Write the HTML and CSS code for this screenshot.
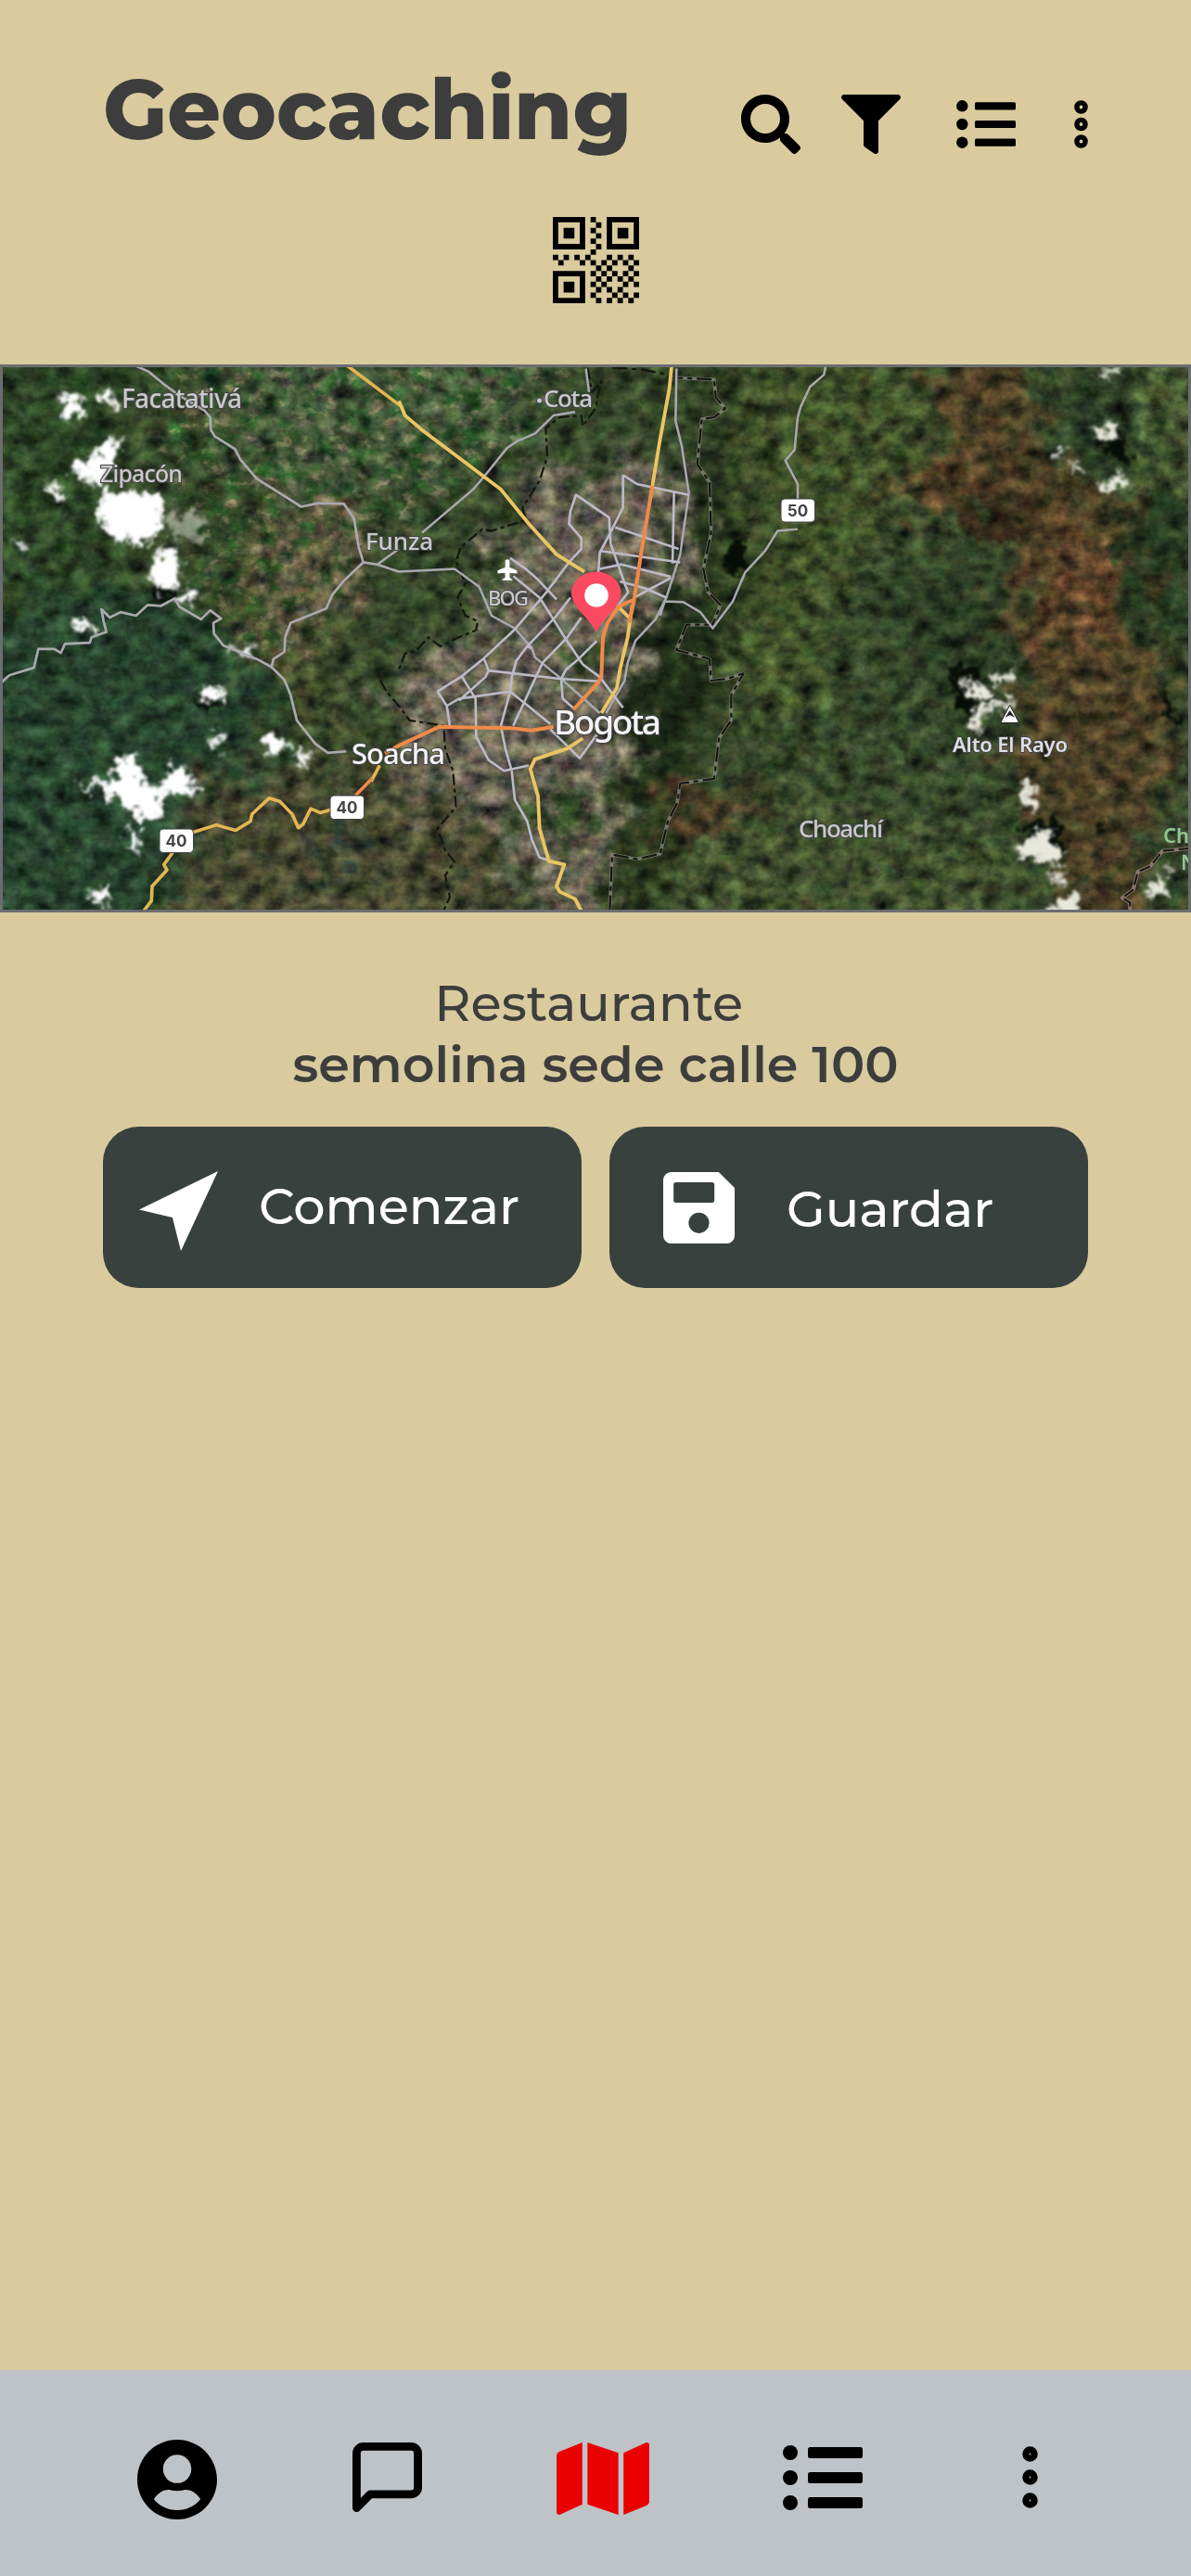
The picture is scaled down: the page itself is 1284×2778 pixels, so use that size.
FILE: index.html
```html
<!DOCTYPE html>
<html lang="es">
<head>
<meta charset="utf-8">
<title>Geocaching</title>
<link rel="stylesheet" href="styles.css">
</head>
<body>
<div class="screen">
  <header class="top">
    <h1 class="title">Geocaching</h1>
    <div class="actions">
      <svg class="ic-search" viewBox="0 0 512 512"><path d="M505 442.7L405.3 343c-4.5-4.5-10.6-7-17-7H372c27.600-35.300 44-79.700 44-128C416 93.100 322.900 0 208 0S0 93.100 0 208s93.100 208 208 208c48.300 0 92.700-16.400 128-44v16.300c0 6.400 2.500 12.500 7 17l99.700 99.700c9.400 9.400 24.600 9.400 33.900 0l28.300-28.300c9.400-9.400 9.400-24.600.1-34zM208 336c-70.700 0-128-57.200-128-128 0-70.700 57.200-128 128-128 70.700 0 128 57.200 128 128 0 70.700-57.200 128-128 128z"/></svg>
      <svg class="ic-filter" viewBox="0 0 512 512"><path d="M487.976 0H24.028C2.710 0-8.047 25.866 7.058 40.971L192 225.941V432c0 7.831 3.821 15.170 10.237 19.662l80 55.980C298.020 518.690 320 507.493 320 487.980V225.941l184.947-184.970C520.021 25.896 509.338 0 487.976 0z"/></svg>
      <svg class="ic-list" viewBox="0 0 64 52"><circle cx="6.300" cy="6.300" r="6.200"/><circle cx="6.300" cy="26" r="6.200"/><circle cx="6.300" cy="45.700" r="6.200"/><rect x="20" y="2.200" width="44" height="8.200" rx="1.500"/><rect x="20" y="21.900" width="44" height="8.200" rx="1.500"/><rect x="20" y="41.600" width="44" height="8.200" rx="1.500"/></svg>
      <svg class="ic-dots" viewBox="0 0 15 52"><g fill="none" stroke="#000" stroke-width="5.400"><circle cx="7.500" cy="7.500" r="4.600"/><circle cx="7.500" cy="26" r="4.600"/><circle cx="7.500" cy="44.500" r="4.600"/></g></svg>
    </div>
  </header>

  <div class="qr-row">
    <svg class="qr" viewBox="0 0 16 16">
      <path fill="none" stroke="#000" d="M.5.5h5v5h-5zM10.500.5h5v5h-5zM.5 10.500h5v5h-5z"/>
      <path d="M2 2h2v2h-2zM12 2h2v2h-2zM2 12h2v2h-2z"/>
      <path d="M7 0h1v1h-1zM8 1h1v1h-1zM7 2h1v1h-1zM8 3h1v1h-1zM7 4h1v1h-1zM8 5h1v1h-1zM7 6h1v1h-1zM0 7h1v1h-1zM2 7h1v1h-1zM4 7h1v1h-1zM6 7h1v1h-1zM10 7h1v1h-1zM12 7h1v1h-1zM14 7h1v1h-1zM1 8h1v1h-1zM5 8h1v1h-1zM7 8h1v1h-1zM9 8h1v1h-1zM11 8h1v1h-1zM13 8h1v1h-1zM15 8h1v1h-1z"/>
      <path d="M8 9h1v1h-1zM10 9h1v1h-1zM14 9h1v1h-1zM7 10h1v1h-1zM9 10h1v1h-1zM11 10h1v1h-1zM13 10h1v1h-1zM15 10h1v1h-1zM8 11h1v1h-1zM10 11h1v1h-1zM12 11h1v1h-1zM14 11h1v1h-1zM7 12h1v1h-1zM9 12h1v1h-1zM13 12h1v1h-1zM15 12h1v1h-1zM8 13h1v1h-1zM10 13h1v1h-1zM12 13h1v1h-1zM7 14h1v1h-1zM11 14h1v1h-1zM13 14h1v1h-1zM15 14h1v1h-1zM8 15h1v1h-1zM10 15h1v1h-1zM12 15h1v1h-1zM14 15h1v1h-1z"/>
    </svg>
  </div>

  <div class="map">
    <svg viewBox="3 396 1278 585" preserveAspectRatio="none">
      <defs>
        <filter id="soft" x="-20%" y="-20%" width="140%" height="140%" color-interpolation-filters="sRGB"><feTurbulence type="fractalNoise" baseFrequency=".03" numOctaves="5" seed="3" result="n"/><feGaussianBlur in="SourceGraphic" stdDeviation="12" result="b"/><feDisplacementMap in="b" in2="n" scale="110" xChannelSelector="R" yChannelSelector="G"/></filter>
        <filter id="ragged" x="-10%" y="-10%" width="120%" height="120%" color-interpolation-filters="sRGB"><feTurbulence type="fractalNoise" baseFrequency=".09" numOctaves="4" seed="8" result="n"/><feGaussianBlur in="SourceGraphic" stdDeviation="2" result="s"/><feDisplacementMap in="s" in2="n" scale="28" xChannelSelector="R" yChannelSelector="G" result="d"/><feGaussianBlur in="d" stdDeviation=".8"/></filter>
        <filter id="grain" x="0" y="0" width="100%" height="100%" color-interpolation-filters="sRGB"><feTurbulence type="fractalNoise" baseFrequency=".05 .06" numOctaves="6" seed="5"/><feColorMatrix values="1 .5 .2 0 -.35  .8 .7 .2 0 -.34  .8 .5 .4 0 -.36  0 0 0 0 1"/></filter>
        <filter id="fields" x="0" y="0" width="100%" height="100%" color-interpolation-filters="sRGB"><feTurbulence type="fractalNoise" baseFrequency=".06 .08" numOctaves="4" seed="21"/><feColorMatrix values="0 0 0 0 .52  0 0 0 0 .47  0 0 0 0 .38  7 0 0 0 -3.900"/></filter>
        <filter id="crops" x="0" y="0" width="100%" height="100%" color-interpolation-filters="sRGB"><feTurbulence type="fractalNoise" baseFrequency=".05" numOctaves="4" seed="33"/><feColorMatrix values="0 0 0 0 .12  0 0 0 0 .31  0 0 0 0 .13  0 5 0 0 -2.500"/></filter>
        <filter id="feather" x="-10%" y="-10%" width="120%" height="120%"><feGaussianBlur stdDeviation="16"/></filter>
        <mask id="plain"><path fill="#fff" filter="url(#feather)" d="M190 370H640L560 480 400 600 330 720 250 700 210 600 160 470Z"/></mask>
      </defs>
      <rect x="0" y="390" width="1290" height="600" fill="#35452a"/>
      <g filter="url(#soft)">
        <path fill="#27412d" d="M-30 640 200 640 290 740 300 850 150 1030-60 1030Z"/>
        <path fill="#2d4326" d="M-60 350H140V640H-60Z"/>
        <path fill="#40482a" d="M130 430 250 470 280 560 230 640 300 740 360 800 380 720 300 640 310 540 220 440Z"/>
        <path fill="#44553a" d="M230 360H620L560 480 420 520 380 560 300 540 240 480Z"/>
        <path fill="#5a543e" d="M310 540 380 520 400 610 350 690 300 720 270 640Z"/>
        <path fill="#454630" d="M210 840 480 810 600 1030 180 1030Z"/>
        <path fill="#676154" d="M545 575 570 500 650 510 690 490 745 510 740 590 735 640 690 740 665 830 660 900 640 1000 600 1000 540 900 470 860 420 840 430 720 530 670Z"/>
        <path fill="#2c3a1f" d="M725 360 770 400 765 540 745 650 760 680 730 800 680 850 650 1030 740 930 760 780 800 640 790 540 790 360Z"/>
        <path fill="#1c2917" d="M715 630 755 660 740 800 690 880 675 780 700 700ZM748 480 770 480 765 600 745 600Z"/>
        <path fill="#3e4d29" d="M790 360 1010 360 980 520 900 640 890 740 850 800 790 780 800 600Z"/>
        <path fill="#3e4c2d" d="M730 900 860 840 960 880 1100 900 1100 1030 700 1030Z"/>
        <path fill="#4b3e26" d="M1020 360 1110 360 1120 500 1210 530 1290 560 1240 630 1210 700 1260 800 1220 850 1240 1030 1170 1030 1130 880 1080 830 1110 730 1080 650 1100 560 1000 560 950 540 1010 490Z"/>
        <path fill="#4a3e26" d="M1100 660 1260 700 1270 860 1200 900 1120 840Z"/>
        <path fill="#35291a" d="M1040 530 1110 510 1100 580 1040 580Z"/>
        <path fill="#5c412a" d="M1120 550 1220 590 1200 700 1120 700ZM980 520 1040 500 1030 540 980 550ZM1230 590 1280 560 1270 590 1230 620Z"/>
        <path fill="#223620" d="M1180 580 1290 530 1290 580 1200 620ZM1220 640 1290 580 1290 680 1250 690Z"/>
        <path fill="#2b3b24" d="M930 640 1080 610 1100 700 1070 780 1000 720Z"/>
        <path fill="#435430" d="M1220 370H1330V540L1220 530Z"/>
        <path fill="#283a25" d="M1130 410 1210 430 1220 520 1150 500Z"/>
        <path fill="#493825" d="M720 850 830 860 790 890 710 920Z"/>
        <path fill="#1d3536" d="M348 885 380 885 370 920 342 930Z"/>
        <path fill="#29401f" d="M600 700 640 680 650 720 610 740ZM560 860 620 860 620 900 580 900Z"/>
      </g>
      <g mask="url(#plain)"><rect x="140" y="390" width="520" height="340" filter="url(#crops)" opacity=".7"/><rect x="140" y="390" width="520" height="340" filter="url(#fields)" opacity=".55"/></g>
      <rect class="grain" x="0" y="390" width="1290" height="600" filter="url(#grain)"/>

      <g filter="url(#ragged)">
        <g fill="#060d06"><ellipse cx="794" cy="600" rx="11" ry="24"/><path d="M1022 720 1056 716 1066 750 1044 780 1030 760ZM1100 890 1140 880 1150 920 1110 910ZM155 635 185 625 195 650 165 648ZM205 755 240 750 225 768ZM1180 470 1210 465 1220 500 1190 490ZM1178 888 1192 888 1196 902 1184 898Z"/><path d="M1245 735 1262 752 1272 785 1260 775Z"/></g>
        <g fill="#fff" stroke="#fff" stroke-width="2">
          <path d="M62 425 90 434 92 448 72 446ZM112 424 124 426 120 442 112 436ZM80 502 118 480 128 470 126 496 114 515 105 524 80 512ZM108 535 140 528 170 535 176 560 165 580 150 588 125 582 108 560ZM165 600 185 592 196 615 192 630 180 640 162 622ZM195 640 210 638 206 650 192 646ZM54 522 66 526 60 536ZM18 582 28 588 22 592ZM78 666 98 672 98 682 82 678Z"/>
          <path d="M128 818 145 818 152 840 168 850 190 828 212 846 205 856 172 858 172 878 152 882 122 862 120 850 84 848 122 840ZM215 742 242 742 240 756 216 752ZM285 796 306 794 304 812 288 810ZM318 808 332 812 328 828ZM226 796 240 794 236 806ZM138 898 148 896 150 916 140 912ZM98 964 118 956 112 978ZM250 704 274 694 268 706Z"/>
        </g>
        <g fill="#e8e8dc" stroke="#e8e8dc" stroke-width="1"><path d="M1036 732 1054 736 1068 748 1060 756 1044 748ZM1072 728 1094 724 1092 734 1074 736ZM1052 764 1090 754 1088 762 1060 770 1058 790 1046 782ZM1098 846 1110 846 1120 868 1112 876 1102 862ZM1100 910 1130 890 1134 910 1148 924 1140 936 1120 924 1098 922ZM1130 944 1148 942 1140 956ZM1130 980 1155 964 1162 970 1158 985 1124 990ZM1180 462 1206 460 1204 472 1184 472ZM1150 500 1164 502 1160 512ZM1186 518 1214 512 1218 524 1190 528ZM1136 488 1146 486 1142 496ZM1184 400 1204 398 1200 406ZM1236 958 1256 944 1254 964 1240 970ZM1256 930 1264 934 1260 940Z"/><path d="M360 404 370 412 364 416ZM180 558 198 552 220 560 218 580 188 582Z" opacity=".5"/></g>
      </g>

      <g class="line" transform="translate(0 380) scale(.33333 .38903)">
        <g stroke="#aba8ae" stroke-width="2.700">
          <path d="M440 38 480 53 530 88 580 120 660 160 680 180 682 215 695 233 760 268 778 298 830 350 975 428 1030 418 1112 420 1145 460 1160 540 1175 582 1220 588 1290 608"/>
          <path d="M1175 582 1110 635 1075 672 1055 710 940 750 922 790 920 830 885 850 878 872 920 908 940 950 960 1020 1020 1085 1060 1110 1120 1106M1220 588 1290 545"/>
          <path d="M5 915 30 895 110 874 124 822 175 822 197 833 210 808 290 805 296 790 344 775 335 745 328 712 355 735 390 720 440 730 478 700 520 703 565 682 580 705 650 740 680 715 715 738 690 750 692 780 722 812 830 850 878 872"/>
        </g>
        <g stroke="#e3b552" stroke-width="3.600"><path d="M1125 38 1295 148M465 1548 490 1520 492 1480 540 1435 530 1420 560 1385M625 1330 700 1310 762 1325 810 1300 815 1280 870 1236 905 1245 945 1280 965 1318 980 1308 1005 1265 1035 1276 1070 1268M1200 1190 1228 1145"/></g>
        <path stroke="#f0894c" stroke-width="3.600" d="M1150 1228 1205 1180"/>
      </g>
      <g class="line" transform="translate(430 380) scale(.33333 .38903)">
        <g stroke="#14150f" stroke-width="2.200"><path stroke="#85857a" stroke-width="3.600" opacity=".8" d="M880 70 1020 75 1025 125 1055 155 1020 180 980 185 965 310 1005 360 1010 500 985 600 1000 665 1040 700 1015 755 930 755 898 825 1005 850 1010 910 1060 905 1115 890 1075 950 1075 1020 1035 1070 1020 1182 910 1195 900 1250 870 1300 845 1390 770 1405 690 1392 682 1548"/><path stroke-dasharray="16 5 5 5" d="M690 42 790 48 870 62 880 70 1020 75 1025 125 1055 155 1020 180 980 185 965 310 1005 360 1010 500 985 600 1000 665 1040 700 1015 755 930 755 898 825 1005 850 1010 910 1060 905 1115 890 1075 950 1075 1020 1035 1070 1020 1182 910 1195 900 1250 870 1300 845 1390 770 1405 690 1392 682 1548"/>
        <path stroke-dasharray="12 4 4 4" d="M610 45 625 110 655 80 640 130 640 150 595 205 590 175 520 180 475 210 480 290 455 355 430 390 400 430 410 465 300 495 270 490 200 540 185 580 215 640 190 680 215 730 255 745 250 770 180 795 135 815 95 790 55 828 20 835 0 880M-60 910-40 940 0 980 35 1020 145 1035 150 1100 175 1160 185 1260 125 1320 150 1380 180 1412 150 1450 165 1510 145 1548"/></g>
        <g stroke="#aaa8b0" stroke-width="2.500"><path d="M75 500 240 380 275 345 350 265 385 245 440 225 500 175 570 165M605 45 615 110M0 608 180 600 260 650 300 730 375 765 430 820 440 845 525 905 650 1000M898 45 895 190 915 260 938 390 910 560 865 680 830 740 765 800 740 860 730 910 670 1000M845 730 860 690 920 692 975 720 1015 765 1080 690 1120 610 1185 550 1225 495 1290 490M1290 180 1280 270 1250 300 1290 365"/></g>
        <g stroke="#bcbac8" stroke-width="2.600"><path d="M360 570 410 600 450 630 510 685M370 620 455 680 500 740 540 795 595 865 650 900 725 985M125 940 200 900 275 848 375 768 480 662 550 582 590 545 590 515 550 475 555 440 573 395 680 458 685 530 730 640 742 665 705 705M725 340 725 430 690 490 650 555 645 610M725 340 770 365 938 395M890 390 885 585M700 485 905 545M650 550 910 582M650 600 720 588 880 622M715 635 800 655 865 680M760 680 880 625M125 940 155 980 165 1035M155 980 195 960 360 940 490 1030M195 965 280 900 290 882 520 905 650 912M275 848 290 882M205 900 248 960 250 1065 290 1130 340 1160 420 1145M590 735 545 790 465 860 370 1035M555 680 505 735 415 815 380 855 365 900 360 940 330 1035 345 1100 365 1160 375 1240 415 1300 430 1350 455 1400 490 1410M640 800 575 855 540 880 525 905 530 960 570 990M490 1045 585 1125 640 1060M430 820 415 815"/></g>
        <g stroke="#ebc563" stroke-width="3.800"><path d="M0 135 20 175 75 215 330 380 420 475 510 560 600 608"/><path d="M882 40 875 100 845 240 820 370M755 700 740 790 715 880 705 930 655 1000M595 1070 545 1098 440 1128 425 1155 450 1230 455 1320 485 1410 535 1420 510 1480 520 1495 570 1515 590 1548M710 705 750 740"/></g>
        <g stroke="#ef8b48" stroke-width="4"><path d="M820 370 785 550 760 690 745 750M760 685 710 705 675 750 660 790 655 900 645 915 565 990M-45 1112 0 1090 130 1038 370 1042 430 1048 500 1038"/></g>
        <path fill="#fff" stroke="none" d="M344 577Q351 571 358 577V596L382 605V613L358 611V624L369 632H332L344 624V611L319 613V605L344 596Z"/>
      </g>
      <g class="line" transform="translate(860 380) scale(.33333 .38903)">
        <path stroke="#aaa8a8" stroke-width="2.500" d="M90 38 85 62 40 95 10 150 0 180M0 365V440"/>
        <path stroke="#8a756c" stroke-width="4" d="M1268 1375 1180 1382 1140 1425 1100 1440 1085 1490 1050 1512 1075 1525V1548"/>
        <path stroke="#14150f" stroke-width="2" stroke-dasharray="12 5" d="M1268 1375 1180 1382 1140 1425 1100 1440 1085 1490 1050 1512 1075 1525V1548"/>
        <path fill="#fff" stroke="#222" stroke-width="1" d="M686 978 716 1027H656Z"/><path fill="#222" stroke="none" d="M686 992 702 1012 686 1006 671 1012Z"/>
      </g>

      <g class="shield"><rect x="172" y="894" width="36.500" height="25.500" rx="4"/><rect x="356" y="858" width="36.500" height="25.500" rx="4"/><rect x="842" y="538" width="36.500" height="25" rx="4"/></g>
      <g class="num"><text x="190" y="913">40</text><text x="374" y="877">40</text><text x="860" y="556.500">50</text></g>

      <g class="place">
        <text x="131" y="440" textLength="130" font-size="28">Facatativá</text>
        <text x="108" y="520" textLength="89" font-size="25">Zipacón</text>
        <text x="394" y="593" textLength="73" font-size="26">Funza</text>
        <text x="586" y="439" textLength="53" font-size="26">Cota</text><circle cx="581.500" cy="432" r="2.500"/>
        <text x="526" y="653" textLength="44" font-size="22">BOG</text>
        <text x="861" y="903" textLength="91" font-size="26">Choachí</text>
        <text class="bright" x="379" y="824" textLength="101" font-size="31">Soacha</text>
        <text class="bright" x="597" y="792" textLength="116" font-size="37">Bogota</text>
        <text class="bright peak" x="1027" y="811" textLength="124" font-size="22">Alto El Rayo</text>
        <text class="park" x="1254" y="909" font-size="22">Ch</text><text class="park" x="1273" y="938" font-size="22">N</text>
      </g>
      <path fill="#fc4a62" d="M643 682C635 665 616 656 616 638A27 25 0 0 1 669.500 638C669.500 656 650 665 643 682Z"/>
      <circle cx="643" cy="642" r="12.800" fill="#fff"/>
    </svg>
  </div>

  <main class="place-info">
    <p class="kind">Restaurante&nbsp;</p>
    <p class="name">semolina sede calle 100</p>
    <div class="buttons">
      <button class="btn start"><svg viewBox="0 0 84 85"><path fill="#fff" d="M84 0 44.500 85 35.500 49.500 0 41Z"/></svg><span>Comenzar</span></button>
      <button class="btn save"><svg viewBox="3 3 18 18"><path fill="#fff" fill-rule="evenodd" d="M17 3H5a2 2 0 0 0-2 2v14a2 2 0 0 0 2 2h14a2 2 0 0 0 2-2V7l-4-4zM12 18.400a2.600 2.600 0 1 1 0-5.200 2.600 2.600 0 0 1 0 5.200zM15.300 10.700H6.200a.6.6 0 0 1-.6-.6V6.200a.6.6 0 0 1 .6-.6h9.100a.6.6 0 0 1 .6.6v3.900a.6.6 0 0 1-.6.600z"/></svg><span>Guardar</span></button>
    </div>
  </main>

  <nav class="bottom">
    <svg class="n-user" viewBox="2 2 20 20"><path d="M12 2C6.480 2 2 6.480 2 12s4.480 10 10 10 10-4.480 10-10S17.520 2 12 2zm0 3.800a3.550 3.550 0 1 1 0 7.100 3.550 3.550 0 0 1 0-7.100zm0 13.900c-2.350 0-4.450-1.070-5.850-2.750.75-1.250 2.050-2.400 3.750-2.400.45 0 1.150.3 2.100.3s1.650-.3 2.100-.3c1.700 0 3 1.150 3.750 2.400-1.400 1.680-3.500 2.750-5.850 2.750z" fill-rule="evenodd"/></svg>
    <svg class="n-chat" viewBox="1.800 1.800 20.400 20.400"><path fill="none" stroke="#000" stroke-width="2.400" stroke-linejoin="round" d="M21 15a2 2 0 0 1-2 2H7l-4 4V5a2 2 0 0 1 2-2h14a2 2 0 0 1 2 2z"/></svg>
    <svg class="n-map" viewBox="0 32 576 448"><path fill="#eb0000" d="M0 117.660v346.320c0 11.320 11.430 19.060 21.940 14.860L160 416V32L20.120 87.950A32.006 32.006 0 0 0 0 117.660zM192 416l192 64V96L192 32v384zM554.060 33.160L416 96v384l139.880-55.950A31.996 31.996 0 0 0 576 394.340V48.020c0-11.320-11.430-19.060-21.940-14.860z"/></svg>
    <svg class="n-list" viewBox="0 0 86 70"><circle cx="8" cy="8" r="8"/><circle cx="8" cy="35" r="8"/><circle cx="8" cy="62" r="8"/><rect x="27" y="2" width="59" height="12" rx="2.500"/><rect x="27" y="29" width="59" height="12" rx="2.500"/><rect x="27" y="56" width="59" height="12" rx="2.500"/></svg>
    <svg class="n-dots" viewBox="0 0 17 67"><g fill="none" stroke="#000" stroke-width="7.300"><circle cx="8.500" cy="8.500" r="4.600"/><circle cx="8.500" cy="33.500" r="4.600"/><circle cx="8.500" cy="58.500" r="4.600"/></g></svg>
  </nav>
</div>
</body>
</html>
```
FILE: styles.css
```css
* { box-sizing: border-box; }
body { margin: 0; background: #d9cb9e; color: #3d3d3d; font-family: Montserrat, Inter, "Noto Sans", sans-serif; }
svg { display: block; flex: none; }
.screen { width: 1284px; height: 2778px; display: flex; flex-direction: column; }

.top { height: 234px; display: flex; align-items: flex-start; justify-content: space-between; padding: 64px 111px 0 111px; }
.title { margin: 0; font-size: 90px; line-height: 108px; font-weight: 800; }
.actions { display: flex; align-items: center; padding-top: 38px; height: 102px; }
.ic-search, .ic-filter { width: 64px; height: 64px; }
.ic-filter { margin-left: 44px; }
.ic-list { width: 64px; height: 52px; margin-left: 60px; }
.ic-dots { width: 15px; height: 52px; margin-left: 63px; }

.qr-row { height: 159px; display: flex; justify-content: center; }
.qr { width: 93px; height: 93px; }

.map { height: 591px; border: 3px solid #6c6d70; overflow: hidden; }
.map svg { width: 1278px; height: 585px; }
.grain { mix-blend-mode: overlay; opacity: .85; }
.line { fill: none; stroke-linejoin: round; stroke-linecap: butt; }
.line path { vector-effect: non-scaling-stroke; }
.shield rect { fill: #fff; stroke: #444; stroke-width: 1; }
.num { font: 700 17px Inter, sans-serif; fill: #444; text-anchor: middle; }
.place { font-family: "Noto Sans", sans-serif; font-weight: 500; fill: #c9c9cc; stroke: #444; stroke-width: 2px; paint-order: stroke; }
.bright { fill: #f4f4f6; }
.peak { font-weight: 600; fill: #dddde4; }
.park { fill: #8fcb8b; font-weight: 600; }

.place-info { flex: 1; padding-top: 65px; }
.place-info p { margin: 0; font-size: 54px; line-height: 66px; text-align: center; }
.kind { font-weight: 500; }
.place-info .name { font-weight: 600; }
.buttons { display: flex; gap: 30px; padding: 34px 111px 0; }
.btn { width: 516px; height: 174px; border: 0; border-radius: 38px; background: #39413f; color: #fff; font: 500 54px/66px Montserrat, Inter, sans-serif; display: flex; align-items: center; padding: 0; }
.start { padding-left: 39px; }
.start svg { width: 85px; height: 86px; margin-top: 7px; }
.start span { margin: 0 0 2px 44px; }
.save { padding-left: 58px; }
.save svg { width: 77px; height: 77px; }
.save span { margin: 4px 0 0 56px; }

.bottom { height: 222px; background: #bec3c7; display: flex; align-items: flex-start; padding-left: 148px; }
.n-user { width: 86px; height: 86px; margin-top: 75px; }
.n-chat { width: 75px; height: 75px; margin: 78px 0 0 146px; }
.n-map { width: 100px; height: 78px; margin: 78px 0 0 145px; }
.n-list { width: 86px; height: 70px; margin: 81px 0 0 144px; }
.n-dots { width: 17px; height: 67px; margin: 82px 0 0 172px; }
```
